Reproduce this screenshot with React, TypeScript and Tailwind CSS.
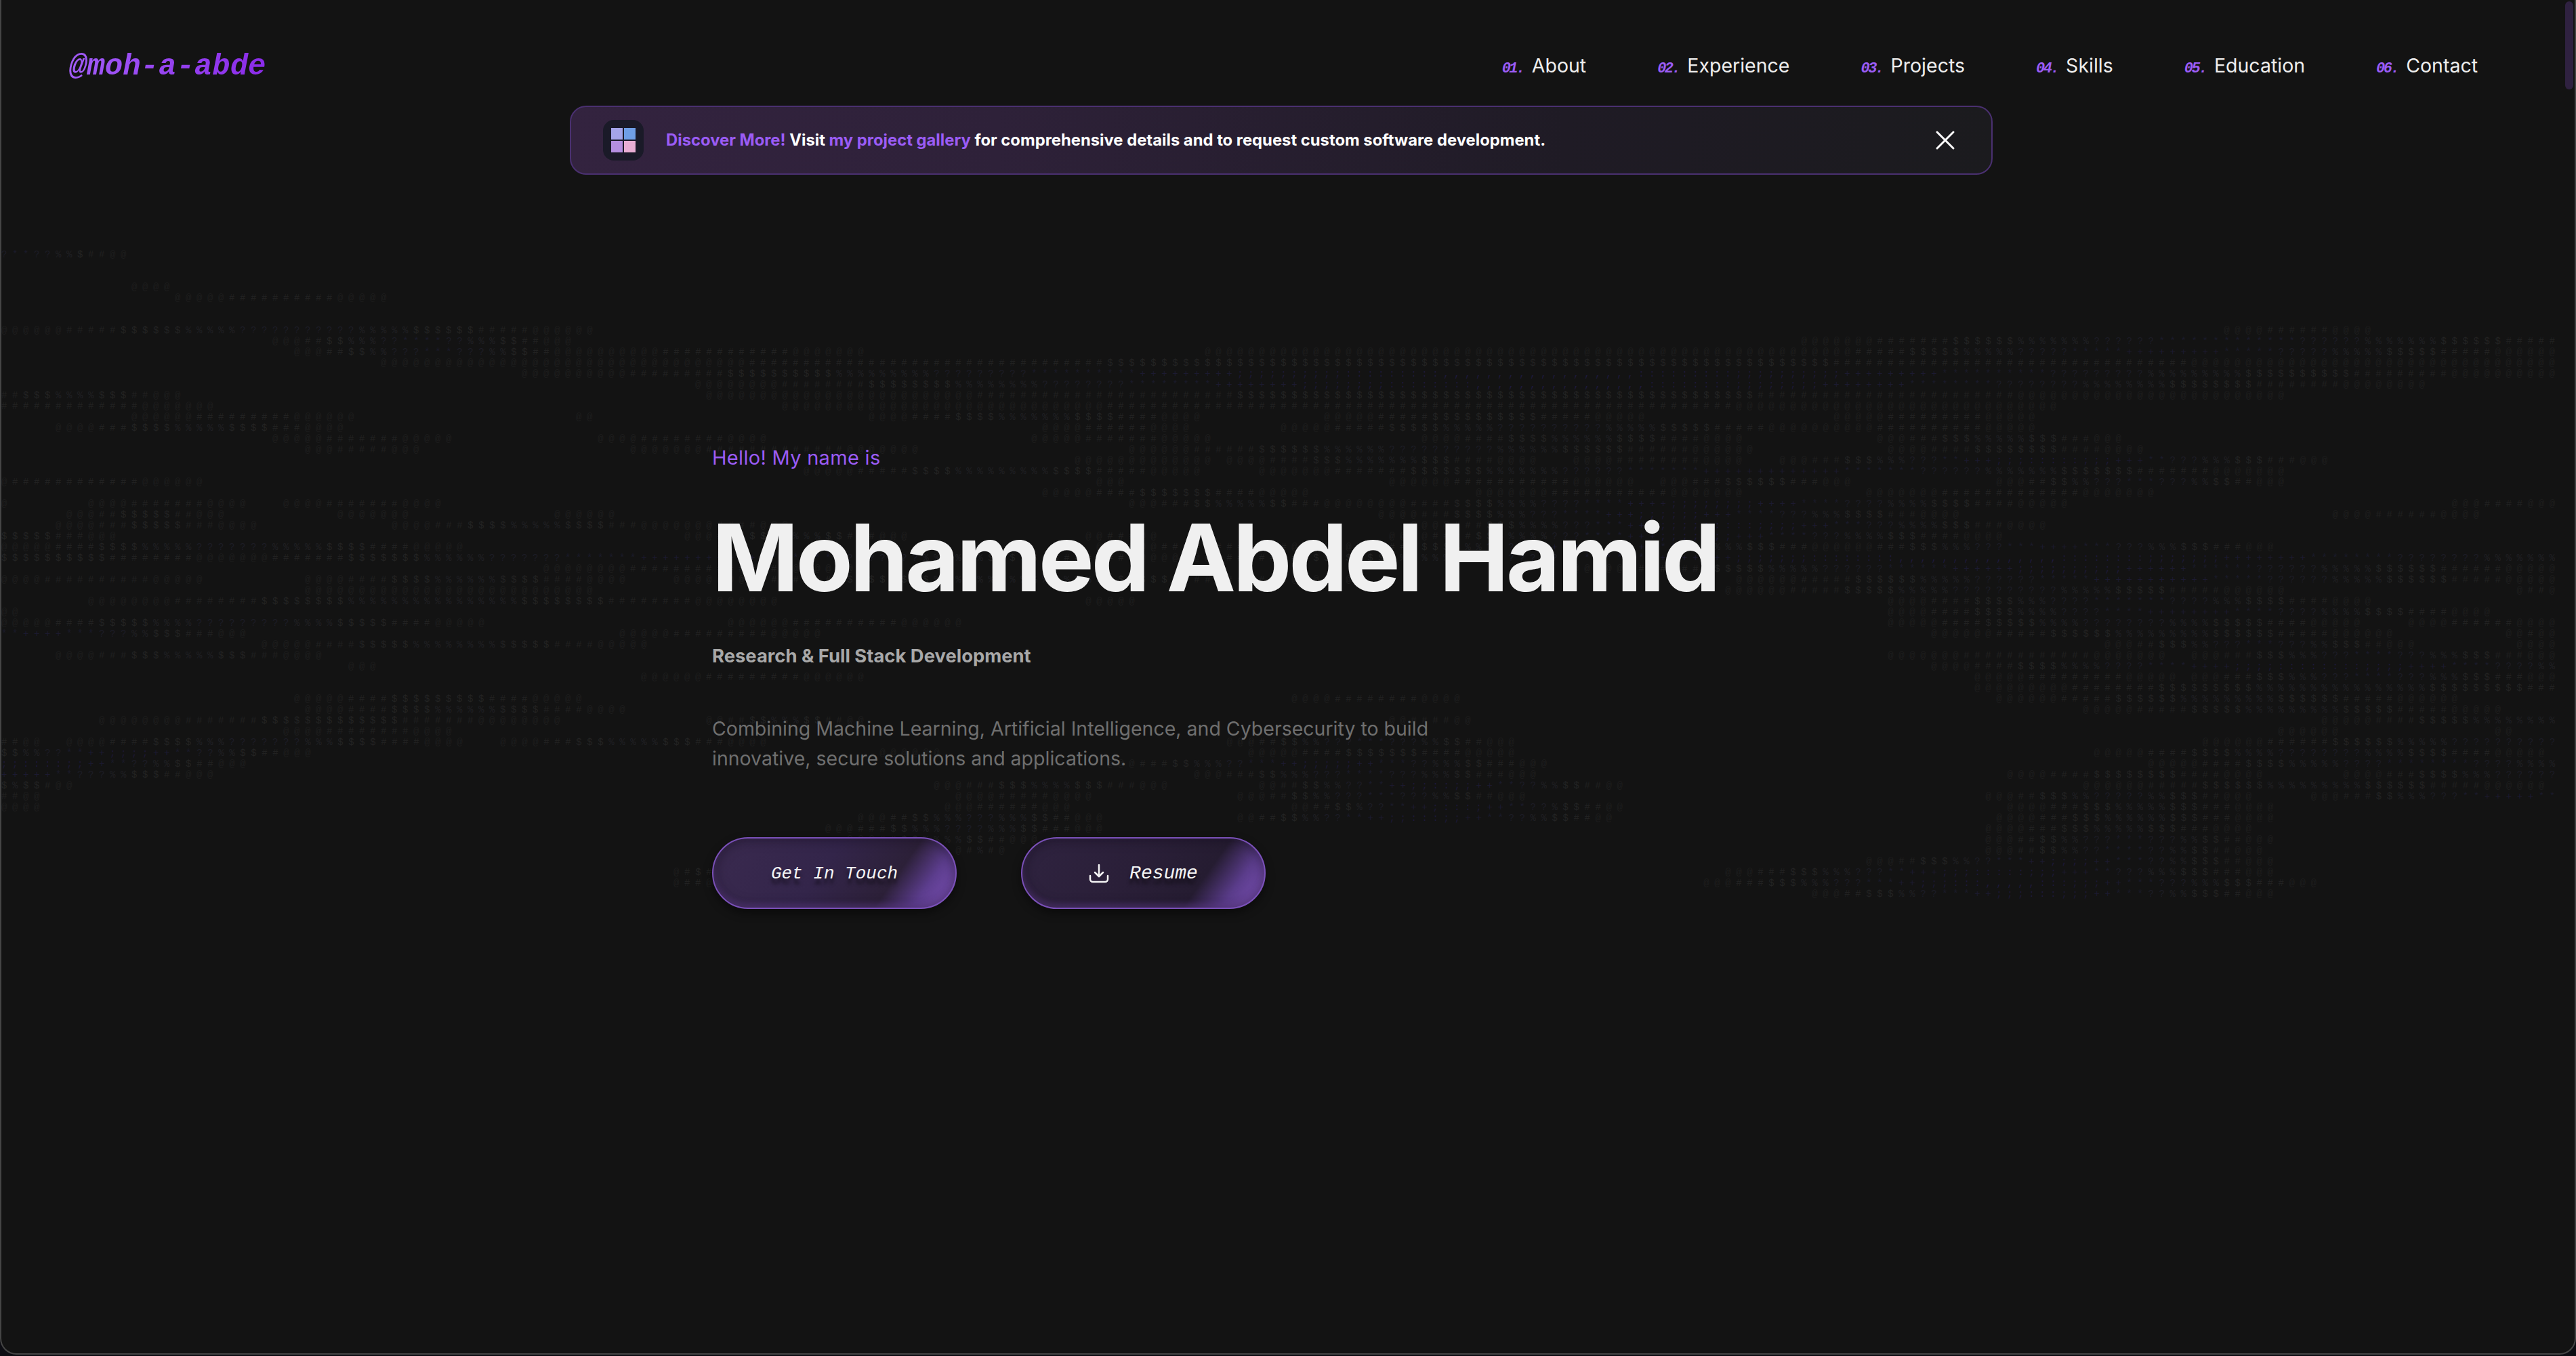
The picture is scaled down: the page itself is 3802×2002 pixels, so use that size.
import { X } from "lucide-react";

const sans = "font-['Inter','Noto_Sans',sans-serif]";
const pixel = "font-['Liberation_Mono','DejaVu_Sans_Mono',monospace] italic";

const navItems = [
  { num: "01.", label: "About" },
  { num: "02.", label: "Experience" },
  { num: "03.", label: "Projects" },
  { num: "04.", label: "Skills" },
  { num: "05.", label: "Education" },
  { num: "06.", label: "Contact" },
];

// ascii field: [row, startCol, endCol, peak level]
const segments: number[][] = [
  [23, -8, 12, 5], [26, 12, 16, 0], [27, 16, 36, 1], [30, 0, 55, 4], [31, 25, 53, 5],
  [31, 166, 245, 5], [30, 205, 219, 1], [32, 27, 54, 5], [32, 54, 80, 1], [32, 111, 165, 0],
  [32, 165, 236, 6], [33, 35, 236, 2], [34, 48, 236, 9], [35, 64, 224, 9], [36, -3, 17, 3],
  [36, 65, 211, 2], [37, -8, 20, 1], [37, 72, 190, 1], [38, 12, 33, 1], [38, 53, 55, 0],
  [38, 80, 111, 3], [38, 122, 152, 2], [38, 169, 188, 1], [39, 5, 32, 3], [39, 96, 110, 1],
  [39, 118, 168, 4], [39, 168, 188, 1], [40, 25, 42, 1], [40, 55, 71, 1], [40, 95, 112, 1],
  [40, 131, 161, 3], [40, 173, 196, 3], [41, 28, 39, 1], [41, 58, 85, 1], [41, 104, 162, 4],
  [41, 174, 198, 2], [42, 99, 112, 0], [42, 113, 142, 3], [42, 145, 161, 1], [42, 164, 215, 8],
  [43, 74, 111, 3], [43, 116, 211, 6], [44, -5, 19, 1], [44, 101, 104, 0], [44, 128, 151, 1],
  [44, 153, 171, 2], [44, 184, 211, 5], [45, 96, 121, 2], [45, 136, 161, 1], [45, 172, 199, 1],
  [46, -2, 1, 0], [46, 8, 23, 1], [46, 26, 41, 1], [46, 104, 125, 3], [46, 125, 191, 7],
  [46, 226, 236, 1], [47, 6, 21, 2], [47, 31, 38, 0], [47, 51, 57, 0], [47, 127, 181, 7],
  [47, 215, 229, 1], [48, 5, 24, 2], [48, 36, 63, 3], [48, 63, 73, 1], [48, 130, 189, 8],
  [49, -6, 11, 2], [49, 63, 84, 3], [49, 100, 107, 1], [49, 128, 185, 7], [50, 0, 43, 4],
  [50, 101, 125, 1], [50, 125, 170, 7], [50, 170, 210, 6], [51, -20, 26, 2], [51, 18, 112, 6],
  [51, 105, 260, 9], [52, 50, 80, 1], [52, 145, 237, 7], [53, -1, 19, 1], [53, 28, 58, 3],
  [53, 62, 125, 3], [53, 160, 237, 6], [54, 28, 55, 0], [54, 159, 211, 4], [54, 232, 236, 1],
  [55, 8, 72, 3], [55, 100, 105, 0], [55, 174, 219, 5], [56, 0, 2, 0], [56, 174, 230, 6],
  [57, 0, 45, 4], [57, 67, 89, 1], [57, 174, 218, 4], [57, 222, 236, 1], [58, -15, 23, 6],
  [58, 57, 76, 1], [58, 178, 221, 3], [58, 231, 236, 1], [59, 24, 60, 3], [59, 194, 223, 5],
  [59, 232, 236, 0], [60, 5, 30, 3], [60, 174, 200, 1], [60, 202, 236, 5], [61, 32, 35, 0],
  [61, 178, 250, 8], [62, 59, 80, 1], [62, 182, 201, 1], [62, 202, 236, 5], [63, 182, 250, 3],
  [64, 27, 54, 2], [64, 119, 135, 1], [64, 184, 227, 3], [65, 28, 58, 3], [65, 192, 231, 3],
  [66, 9, 52, 2], [66, 65, 80, 3], [66, 128, 136, 1], [66, 214, 250, 3], [67, 26, 42, 1],
  [67, 210, 216, 0], [67, 230, 232, 0], [68, -3, 4, 1], [68, 6, 43, 4], [68, 46, 71, 3],
  [68, 113, 140, 5], [68, 203, 260, 4], [69, -5, 29, 7], [69, 81, 87, 0], [69, 115, 140, 2],
  [69, 193, 235, 4], [70, -15, 23, 8], [70, 102, 143, 7], [70, 198, 250, 5], [71, -15, 20, 6],
  [71, 110, 142, 5], [71, 185, 209, 2], [71, 216, 250, 4], [72, -4, 7, 3], [72, 86, 108, 3],
  [72, 116, 150, 8], [72, 192, 235, 3], [73, -3, 4, 1], [73, 88, 101, 1], [73, 114, 141, 5],
  [73, 183, 208, 4], [73, 213, 250, 6], [74, -2, 4, 0], [74, 87, 99, 1], [74, 119, 150, 8],
  [74, 185, 210, 3], [75, 79, 102, 4], [75, 114, 149, 8], [75, 184, 210, 3], [76, 76, 102, 4],
  [76, 183, 208, 3], [77, 78, 96, 3], [77, 183, 210, 5], [78, 88, 93, 3], [78, 183, 209, 5],
  [79, 172, 210, 7], [80, 62, 67, 2], [80, 159, 210, 8], [81, 62, 66, 2], [81, 157, 214, 9],
  [82, 167, 210, 8],
];

const ramp = "@#$%?*+;:,";
const rampColors = [
  "text-[#1e1e1e]",
  "text-[#212121]",
  "text-[#232323]",
  "text-[#202023]",
  "text-[#1d1d26]",
  "text-[#1b1b2b]",
  "text-[#1c1a30]",
  "text-[#1d1935]",
  "text-[#1e1939]",
  "text-[#1f1a3d]",
];

const COLS = 236;
const ROWS = 84;

function buildRows() {
  const grid: number[][] = [];
  for (let r = 0; r < ROWS; r++) grid.push(new Array(COLS).fill(-1));
  for (const [row, start, end, peak] of segments) {
    const half = (end - start) / 2;
    const step = half / (peak + 1);
    for (let c = Math.max(start, 0); c < Math.min(end, COLS); c++) {
      const dist = Math.min(c - start, end - 1 - c);
      grid[row][c] = Math.min(Math.floor(dist / step), peak);
    }
  }
  return grid;
}

function AsciiField() {
  const grid = buildRows();
  return (
    <div className="absolute inset-0 overflow-hidden pointer-events-none select-none">
      {grid.map((row, r) => {
        const runs: { level: number; text: string }[] = [];
        row.forEach((level) => {
          const last = runs[runs.length - 1];
          const ch = level < 0 ? " " : ramp[level];
          if (last && last.level === level) last.text += ch;
          else runs.push({ level, text: ch });
        });
        return (
          <div
            key={r}
            className="h-4 leading-4 whitespace-pre text-[14px] tracking-[7.6px] font-['Liberation_Mono',monospace]"
          >
            {runs.map((run, i) => (
              <span key={i} className={run.level < 0 ? "" : rampColors[run.level]}>
                {run.text}
              </span>
            ))}
          </div>
        );
      })}
    </div>
  );
}

function GlassButton({ children, dark }: { children: React.ReactNode; dark?: boolean }) {
  return (
    <button
      className={`w-[361px] h-[106px] rounded-full flex items-center justify-center gap-[30px] pt-[2px] border-2 border-[#7a50b8] shadow-[inset_0_0_18px_rgba(12,10,18,0.55),inset_0_-5px_8px_rgba(135,85,195,0.45),0_6px_14px_rgba(0,0,0,0.45)] ${
        dark
          ? "bg-[linear-gradient(125deg,#2f2340_0%,#2a1f38_45%,#251c31_72%,#5a3c8a_85%,#8557c2_100%)]"
          : "bg-[linear-gradient(125deg,#3a2a4f_0%,#33254a_45%,#2c2038_72%,#5c3d8d_85%,#8557c2_100%)]"
      }`}
    >
      {children}
    </button>
  );
}

export default function App() {
  return (
    <div className="bg-[#0d0d13] min-h-screen">
      <div
        className={`relative h-[2000px] overflow-hidden bg-[#131313] border-x-2 border-b-2 border-[#454545] rounded-b-[24px] ${sans}`}
      >
        <AsciiField />
        <div className="absolute right-[2px] top-[2px] w-[12px] h-[130px] rounded-full bg-[#2f2140]" />

        <div className="relative">
          <header className="h-[156px] pt-[40px] pl-[100px] pr-[143px] flex items-center justify-between">
            <div
              className={`${pixel} font-bold text-[44px] leading-none bg-[linear-gradient(90deg,#a25cf8,#8a2be8)] bg-clip-text text-transparent`}
            >
              @moh-a-abde
            </div>
            <nav className="flex items-center gap-[105px] -mt-[2px]">
              {navItems.map((item) => (
                <a key={item.num} className="flex items-baseline gap-[12px] text-[28.5px] text-[#eeeeee]">
                  <span className={`${pixel} text-[22px] font-bold text-[#9b5cf6] tracking-[-2.5px]`}>{item.num}</span>
                  {item.label}
                </a>
              ))}
            </nav>
          </header>

          <div className="flex justify-center pr-[20px]">
            <div className="w-[2100px] h-[102px] rounded-[24px] border-2 border-[#4a3070] bg-[linear-gradient(90deg,#33233f_0%,#2e2139_30%,#1f1b25_70%,#1b1b1e_100%)] flex items-center pl-[47px] pr-[44px]">
              <div className="w-[60px] h-[60px] rounded-2xl bg-[#1a1a28] flex items-center justify-center shrink-0">
                <div className="grid grid-cols-2 gap-[2px] w-[36px] h-[36px]">
                  <div className="bg-[#a5a5e8]" />
                  <div className="bg-[#6f9fe6]" />
                  <div className="bg-[#b48fe0]" />
                  <div className="bg-[#e8aed4]" />
                </div>
              </div>
              <p className="ml-[33px] text-[23.8px] font-bold text-white whitespace-nowrap">
                <span className="text-[#9b5cf6]">Discover More!</span> Visit{" "}
                <span className="text-[#9b5cf6]">my project gallery</span> for comprehensive details and to request
                custom software development.
              </p>
              <X size={48} strokeWidth={1.5} className="ml-auto text-white" />
            </div>
          </div>

          <section className="pl-[1049px] pt-[398px]">
            <p className="text-[29px] tracking-[0.3px] leading-[40px] text-[#9b5cf6]">Hello! My name is</p>
            <h1 className="mt-[50px] text-[137px] tracking-[-3.9px] leading-[154px] font-bold text-[#f0f0f0] whitespace-nowrap">
              Mohamed Abdel Hamid
            </h1>
            <p className="mt-[48px] text-[27.4px] leading-[40px] font-bold text-[#a8a8a8]">
              Research &amp; Full Stack Development
            </p>
            <p className="mt-[66px] text-[28.5px] leading-[44px] text-[#6f6f6f]">
              Combining Machine Learning, Artificial Intelligence, and Cybersecurity to build
              <br />
              innovative, secure solutions and applications.
            </p>
            <div className="mt-[94px] flex gap-[95px]">
              <GlassButton>
                <span className={`${pixel} text-[26px] text-[#f4f4f4] [text-shadow:0_8px_5px_rgba(0,0,0,0.55)]`}>
                  Get In Touch
                </span>
              </GlassButton>
              <GlassButton dark>
                <svg width="30" height="28" viewBox="0 0 30 28" fill="none" stroke="#f4f4f4" strokeWidth="2.5" strokeLinecap="round" strokeLinejoin="round">
                  <path d="M15 1v17" />
                  <path d="M9 12l6 6 6-6" />
                  <path d="M2 17v5a4 4 0 0 0 4 4h18a4 4 0 0 0 4-4v-5" />
                </svg>
                <span className={`${pixel} text-[28px] text-[#f4f4f4] [text-shadow:0_8px_5px_rgba(0,0,0,0.55)]`}>
                  Resume
                </span>
              </GlassButton>
            </div>
          </section>
        </div>
      </div>
    </div>
  );
}
